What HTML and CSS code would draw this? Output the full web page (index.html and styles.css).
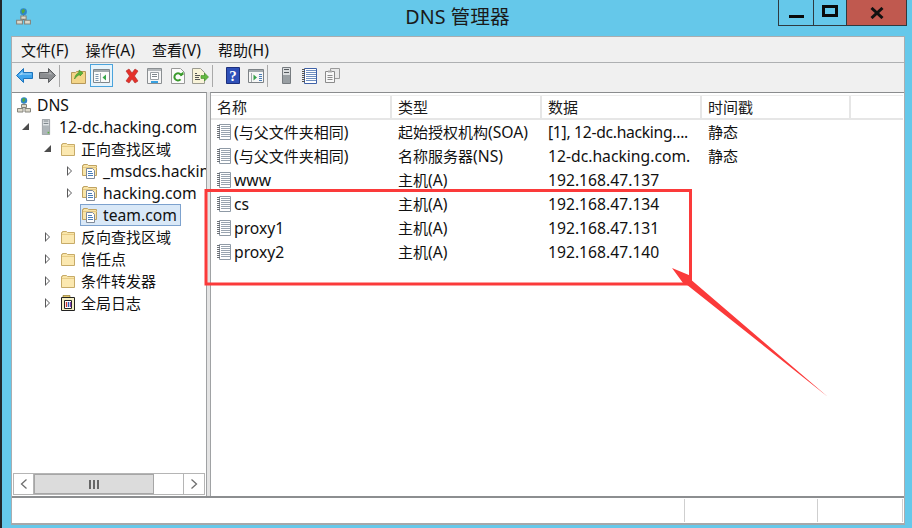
FILE: index.html
```html
<!DOCTYPE html>
<html lang="zh-CN">
<head>
<meta charset="utf-8">
<title>DNS 管理器</title>
<link rel="stylesheet" href="styles.css">
</head>
<body>
<svg class="sprites" width="0" height="0" aria-hidden="true">
  <defs>
    <symbol id="i-dns" viewBox="0 0 16 16">
      <circle cx="8" cy="3.500" r="3.200" fill="#2f86c9"/>
      <path d="M6 2.500l2-1.700 1.500 1.500-1 2-1.500 1z" fill="#55a83a"/>
      <path d="M7.500 6.500h1v2h-1z" fill="#6d7276"/>
      <path d="M5.500 7.500h5v3h-5zM1.500 11.500h5.500v3.500H1.500zM9 11.500h5.500v3.500H9z" fill="#dcd8ca" stroke="#84847c"/>
      <path d="M7.500 10.500h1v1h-1z" fill="#6d7276"/>
    </symbol>
    <symbol id="i-server" viewBox="0 0 16 20">
      <path d="M3.500.5h9v19h-9z" fill="#dfe3e5" stroke="#858c90"/>
      <path d="M5 2.500h6M5 5.500h6" stroke="#59646b"/>
      <path d="M4 8h8v11H4z" fill="#aeb5b9"/>
      <path d="M10 16h2v2h-2z" fill="#57b53c"/>
    </symbol>
    <symbol id="i-folder" viewBox="0 0 16 16">
      <path d="M1.500 14.500v-11h1v-1h4l1 1h7v11z" fill="#f9e5a8" stroke="#c7ab68"/>
      <path d="M2 5h12v1H2z" fill="#e8cd86"/>
      <path d="M2 6h12v8H2z" fill="#fbe8b0"/>
    </symbol>
    <symbol id="i-zone" viewBox="0 0 16 16">
      <path d="M.5 12.500v-10h1v-1h4l1 1h8v10z" fill="#f9e5a8" stroke="#bfa261"/>
      <path d="M1 4.500h14" stroke="#e3c782"/>
      <path d="M4.500 5.500h6l2 2v8h-8z" fill="#fff" stroke="#7f8a99"/>
      <path d="M6 8.500h4M6 10.500h5M6 12.500h5" stroke="#4a7fb8"/>
    </symbol>
    <symbol id="i-log" viewBox="0 0 16 16">
      <path d="M3 .5h7v2H3z" fill="#e3c76a" stroke="#8f7a30" stroke-width=".7"/>
      <path d="M1.500 2.500h13v13h-13z" fill="#f5efc6" stroke="#222"/>
      <path d="M4.500 5.500h7v8h-7z" fill="#fff" stroke="#222"/>
      <path d="M6.500 7v5" stroke="#d0342c" stroke-width="1.300"/>
      <path d="M8.500 7v5" stroke="#2a5db5" stroke-width="1.300"/>
      <path d="M10.500 7v5" stroke="#7a3fb0" stroke-width="1.300"/>
    </symbol>
    <symbol id="i-record" viewBox="0 0 14 16">
      <path d="M2.500.5h11v15h-11z" fill="#fff" stroke="#8f9aa6"/>
      <path d="M4 2.500h9M4 4.500h9M4 6.500h9M4 8.500h9M4 10.500h9M4 12.500h9" stroke="#99a4b0"/>
      <path d="M0 1.500h3M0 3.500h3M0 5.500h3M0 7.500h3M0 9.500h3M0 11.500h3M0 13.500h3" stroke="#6c7076"/>
    </symbol>
    <symbol id="i-notebook" viewBox="0 0 15 16">
      <path d="M2.500.5h12v15h-12z" fill="#fff" stroke="#3f62a8"/>
      <path d="M4 2.500h10M4 4.500h10M4 6.500h10M4 8.500h10M4 10.500h10M4 12.500h10" stroke="#6f8fc0"/>
      <path d="M0 1.500h3M0 3.500h3M0 5.500h3M0 7.500h3M0 9.500h3M0 11.500h3M0 13.500h3" stroke="#555"/>
    </symbol>
    <symbol id="i-win" viewBox="0 0 17 14">
      <path d="M.5.500h16v13H.5z" fill="#fbfbfb" stroke="#7f868b"/>
      <path d="M1 1h15v2H1z" fill="#a3aaae"/>
      <path d="M2.500 5.500h3M2.500 7.500h3M2.500 9.500h3M2.500 11.500h3" stroke="#7f99b0"/>
      <path d="M7.500 4v9.500" stroke="#a3aaae"/>
      <path d="M13 5.500L9.500 8.500 13 11.500z" fill="#37a74a"/>
    </symbol>
  </defs>
</svg>

<div class="desktop-edge"></div>
<header class="titlebar">
  <svg class="app-icon"><use href="#i-dns"/></svg>
  <h1 class="title">DNS 管理器</h1>
  <div class="controls">
    <div class="ctl ctl-min"><span class="min-bar"></span></div>
    <div class="ctl ctl-max"><span class="max-box"></span></div>
    <div class="ctl ctl-close">
      <svg width="14" height="12" viewBox="0 0 14 12"><path d="M1.500 1l11 10M12.500 1l-11 10" stroke="#111" stroke-width="3" fill="none"/></svg>
    </div>
  </div>
</header>

<main class="window">
  <nav class="menubar">
    <span class="menu"><span class="zh">文件</span>(F)</span>
    <span class="menu"><span class="zh">操作</span>(A)</span>
    <span class="menu"><span class="zh">查看</span>(V)</span>
    <span class="menu"><span class="zh">帮助</span>(H)</span>
  </nav>

  <div class="toolbar">
    <span class="tb"><svg width="17" height="15" viewBox="0 0 17 15"><path d="M7.500.5L.5 7.500l7 7V10.500h9v-6h-9z" fill="#3fa4ec" stroke="#1d74bd"/><path d="M2.500 7.500l4-4v2h9v1h-9z" fill="#a5d8f7"/></svg></span>
    <span class="tb"><svg width="17" height="15" viewBox="0 0 17 15"><path d="M9.500.5l7 7-7 7V10.500H.5v-6h9z" fill="#8b8d90" stroke="#5c5e61"/><path d="M1.500 5.500h9v-2l3 3z" fill="#b3b5b7"/></svg></span>
    <span class="sep"></span>
    <span class="tb"><svg width="15" height="17" viewBox="0 0 15 17"><path d="M.5 5.500h4l1-1h9v12H.500z" fill="#f3d588" stroke="#b6985a"/><path d="M3.500 12C4 8 6.500 6 8 5.500V3l4 3-3 3V7.500C7 8 5 10 3.500 12z" fill="#5cb53b" stroke="#3c8a25" stroke-width=".6"/></svg></span>
    <span class="tb tb-on"><svg width="17" height="14"><use href="#i-win"/></svg></span>
    <span class="tb tb-gap"><svg width="16" height="16" viewBox="0 0 16 16"><path d="M2 3l3-2 3 4 3-4 3 2-3.500 5L14 13l-3 2-3-4-3 4-3-2 3.500-5z" fill="#e5302a" stroke="#ad2a26" stroke-width=".6"/></svg></span>
    <span class="tb"><svg width="15" height="16" viewBox="0 0 15 16"><path d="M.5.500h14v15H.5z" fill="#f5f5f5" stroke="#8b8f92"/><path d="M1 1h13v2H1z" fill="#b4b8bb"/><path d="M3.500 4.500h8v7h-8z" fill="#fff" stroke="#9aa0a5"/><path d="M5 6.500h5M5 8.500h5" stroke="#7f878d"/><path d="M4 14h7" stroke="#38a0e0" stroke-width="2"/></svg></span>
    <span class="tb"><svg width="14" height="16" viewBox="0 0 14 16"><path d="M.5.500h9l4 4v11H.5z" fill="#fbfbfb" stroke="#989898"/><path d="M10.500 8a3.600 3.600 0 1 0-.9 3.400" fill="none" stroke="#3a9a2c" stroke-width="2"/><path d="M8 7h4.500V3.500z" fill="#3a9a2c"/></svg></span>
    <span class="tb"><svg width="17" height="16" viewBox="0 0 17 16"><path d="M.5.500h8l4 4V15.500H.5z" fill="#f8f3d8" stroke="#9a9a90"/><path d="M3 5.500h2M3 7.500h5M3 9.500h4M3 11.500h5" stroke="#555"/><path d="M9 7.500h3.500V5l4 4-4 4v-2.500H9z" fill="#63b93f" stroke="#3f8f25" stroke-width=".6"/></svg></span>
    <span class="sep sep-b"></span>
    <span class="tb"><svg width="14" height="17" viewBox="0 0 14 17"><path d="M.5.500h13v16H.5z" fill="#2f50b8" stroke="#1c2f7d"/><text class="help-q" x="7" y="13.500" text-anchor="middle">?</text></svg></span>
    <span class="tb"><svg width="16" height="14" viewBox="0 0 16 14"><path d="M.5.500h15v13H.5z" fill="#f7f7f7" stroke="#7d8286"/><path d="M1 1h14v2H1z" fill="#a3aaae"/><path d="M3.500 4v9" stroke="#a3aaae"/><path d="M5.500 5.500l3.500 3-3.500 3z" fill="#35a04a"/><path d="M11 5.500h3M11 7.500h3M11 9.500h3M11 11.500h3" stroke="#4a7fb8"/></svg></span>
    <span class="sep"></span>
    <span class="tb"><svg width="9" height="17" viewBox="0 0 9 17"><path d="M.5.500h8v16h-8z" fill="#dadddf" stroke="#777c80"/><path d="M2 2.500h5M2 5.500h5" stroke="#565b5f"/><path d="M1 8h7v8H1z" fill="#999fa3"/></svg></span>
    <span class="tb"><svg width="15" height="16"><use href="#i-notebook"/></svg></span>
    <span class="tb"><svg width="15" height="15" viewBox="0 0 15 15"><path d="M5.500.500h9v10h-9z" fill="#e9e9e9" stroke="#9a9a9a"/><path d="M.5 3.500h9v11h-9z" fill="#f8f8f8" stroke="#8b8b8b"/><path d="M2.500 7.500h5M2.500 9.500h5M2.500 11.500h5" stroke="#8b8b8b"/><path d="M3 2.500h4v2H3z" fill="#aaa"/></svg></span>
  </div>

  <div class="panes">
    <aside class="tree-pane">
      <div class="tree">
        <div class="row l0"><div class="label"><svg class="ico"><use href="#i-dns"/></svg><span>DNS</span></div></div>
        <div class="row l1"><i class="exp open"></i><div class="label"><svg class="ico"><use href="#i-server"/></svg><span>12-dc.hacking.com</span></div></div>
        <div class="row l2"><i class="exp open"></i><div class="label"><svg class="ico"><use href="#i-folder"/></svg><span class="zh">正向查找区域</span></div></div>
        <div class="row l3"><i class="exp"></i><div class="label"><svg class="ico"><use href="#i-zone"/></svg><span>_msdcs.hacking.com</span></div></div>
        <div class="row l3"><i class="exp"></i><div class="label"><svg class="ico"><use href="#i-zone"/></svg><span>hacking.com</span></div></div>
        <div class="row l3"><i class="exp none"></i><div class="label selected"><svg class="ico"><use href="#i-zone"/></svg><span>team.com</span></div></div>
        <div class="row l2"><i class="exp"></i><div class="label"><svg class="ico"><use href="#i-folder"/></svg><span class="zh">反向查找区域</span></div></div>
        <div class="row l2"><i class="exp"></i><div class="label"><svg class="ico"><use href="#i-folder"/></svg><span class="zh">信任点</span></div></div>
        <div class="row l2"><i class="exp"></i><div class="label"><svg class="ico"><use href="#i-folder"/></svg><span class="zh">条件转发器</span></div></div>
        <div class="row l2"><i class="exp"></i><div class="label"><svg class="ico"><use href="#i-log"/></svg><span class="zh">全局日志</span></div></div>
      </div>
      <div class="hscroll">
        <div class="sb-btn"><svg width="8" height="10" viewBox="0 0 8 10"><path d="M6.500.500L1.500 5l5 4.500" fill="none" stroke="#6f6f6f" stroke-width="1.300"/></svg></div>
        <div class="sb-thumb"><span class="grip"></span><span class="grip"></span><span class="grip"></span></div>
        <div class="sb-track"></div>
        <div class="sb-btn"><svg width="8" height="10" viewBox="0 0 8 10"><path d="M1.500.500l5 4.500-5 4.500" fill="none" stroke="#6f6f6f" stroke-width="1.300"/></svg></div>
      </div>
    </aside>
    <div class="splitter"></div>
    <section class="list-pane">
      <div class="thead">
        <div class="th c1 zh">名称</div>
        <div class="th c2 zh">类型</div>
        <div class="th c3 zh">数据</div>
        <div class="th c4 zh">时间戳</div>
      </div>
      <div class="tr"><div class="td c1"><svg class="rec"><use href="#i-record"/></svg><span>(<span class="zh">与父文件夹相同</span>)</span></div><div class="td c2"><span><span class="zh">起始授权机构</span>(SOA)</span></div><div class="td c3 trunc">[1], 12-dc.hacking....</div><div class="td c4 zh">静态</div></div>
      <div class="tr"><div class="td c1"><svg class="rec"><use href="#i-record"/></svg><span>(<span class="zh">与父文件夹相同</span>)</span></div><div class="td c2"><span><span class="zh">名称服务器</span>(NS)</span></div><div class="td c3">12-dc.hacking.com.</div><div class="td c4 zh">静态</div></div>
      <div class="tr"><div class="td c1"><svg class="rec"><use href="#i-record"/></svg>www</div><div class="td c2"><span><span class="zh">主机</span>(A)</span></div><div class="td c3">192.168.47.137</div><div class="td c4"></div></div>
      <div class="tr"><div class="td c1"><svg class="rec"><use href="#i-record"/></svg>cs</div><div class="td c2"><span><span class="zh">主机</span>(A)</span></div><div class="td c3">192.168.47.134</div><div class="td c4"></div></div>
      <div class="tr"><div class="td c1"><svg class="rec"><use href="#i-record"/></svg>proxy1</div><div class="td c2"><span><span class="zh">主机</span>(A)</span></div><div class="td c3">192.168.47.131</div><div class="td c4"></div></div>
      <div class="tr"><div class="td c1"><svg class="rec"><use href="#i-record"/></svg>proxy2</div><div class="td c2"><span><span class="zh">主机</span>(A)</span></div><div class="td c3">192.168.47.140</div><div class="td c4"></div></div>
    </section>
  </div>

  <footer class="statusbar">
    <div class="st st-a"></div>
    <div class="st st-b"></div>
    <div class="st st-c"></div>
  </footer>
</main>

<svg class="annotation" width="912" height="528" viewBox="0 0 912 528" aria-hidden="true">
  <rect x="206" y="190.500" width="484.500" height="93.500" fill="none" stroke="#fb3a3a" stroke-width="3"/>
  <path d="M672 268L690 275.500 689 278 828 397 686.500 284.500 683 283z" fill="#fb3a3a"/>
</svg>
</body>
</html>
```

FILE: styles.css
```css
* { box-sizing: border-box; }
html, body { margin: 0; padding: 0; }
body {
  position: relative;
  width: 912px;
  height: 528px;
  overflow: hidden;
  background: #65c8ea;
  font-family: "Noto Sans", "Noto Sans CJK SC", sans-serif;
  font-size: 15.7px;
  color: #111;
}
.zh { font-size: 15px; }
.sprites { position: absolute; }
.desktop-edge {
  position: absolute;
  left: 0;
  top: 0;
  width: 2px;
  height: 528px;
  background: #22262a;
}

.titlebar {
  height: 36px;
  display: flex;
  position: relative;
  justify-content: center;
}
.app-icon {
  position: absolute;
  left: 15px;
  top: 6px;
  width: 17px;
  height: 21px;
}
.title {
  margin: 5px 0 0;
  padding-left: 3px;
  font-size: 19.700px;
  font-weight: 400;
  line-height: 24px;
  color: #1a1a1a;
}
.controls {
  position: absolute;
  top: 0;
  left: 778px;
  display: flex;
  height: 26px;
  border: 1px solid #2e3a40;
  border-top: 0;
}
.ctl {
  height: 25px;
  display: flex;
  align-items: center;
  justify-content: center;
}
.ctl-min { width: 35px; border-right: 1px solid #2e3a40; }
.ctl-max { width: 33px; border-right: 1px solid #2e3a40; }
.ctl-close { width: 59px; background: #c0594f; padding-top: 1px; }
.min-bar { width: 15px; height: 3px; margin-top: 8px; background: #0a0a0a; }
.max-box { width: 16px; height: 12px; margin-bottom: 3px; border: 3px solid #0a0a0a; }

.window {
  margin-left: 11px;
  width: 894px;
  height: 489px;
  border: 1px solid #a9adb0;
  border-bottom: 2px solid #a5a8aa;
  background: #f0f0f0;
  display: flex;
  flex-direction: column;
}
.menubar {
  height: 26px;
  flex: none;
  display: flex;
  align-items: center;
  gap: 17px;
  padding-left: 9px;
  border-bottom: 1px solid #aeb0b2;
}
.menu { line-height: 24px; white-space: nowrap; }

.toolbar {
  height: 29px;
  flex: none;
  display: flex;
  align-items: center;
  padding: 0 0 4px 1px;
}
.tb {
  width: 23px;
  height: 23px;
  flex: none;
  display: flex;
  align-items: center;
  justify-content: center;
}
.tb-on { background: #e6f3fb; border: 1px solid #4aa3dc; }
.tb-gap { margin-left: 7px; }
.sep { width: 1px; height: 22px; margin-right: 7px; background: #a9a9a9; }
.sep-b { margin-right: 8px; }
.help-q { font-family: "Liberation Serif", serif; font-size: 15px; font-weight: 700; fill: #fff; }

.panes {
  flex: 1;
  min-height: 0;
  display: flex;
  border-bottom: 2px solid #8c8e90;
}
.tree-pane {
  width: 195px;
  flex: none;
  background: #fff;
  border-top: 1px solid #8a8c8e;
  border-right: 1px solid #a0a2a4;
  display: flex;
  flex-direction: column;
}
.tree { flex: 1; overflow: hidden; padding-top: 1px; }
.row {
  height: 22px;
  display: flex;
  align-items: center;
  white-space: nowrap;
}
.l0 { padding-left: 2px; }
.l1 { padding-left: 8px; }
.l2 { padding-left: 30px; }
.l3 { padding-left: 52px; }
.exp {
  width: 12px;
  height: 10px;
  margin-right: 4px;
  flex: none;
  position: relative;
}
.exp::before {
  content: "";
  position: absolute;
  left: 3px;
  top: 0;
  border-style: solid;
  border-width: 5px 0 5px 5px;
  border-color: transparent transparent transparent #59595a;
}
.exp::after {
  content: "";
  position: absolute;
  left: 4px;
  top: 2px;
  border-style: solid;
  border-width: 3px 0 3px 3px;
  border-color: transparent transparent transparent #fff;
}
.exp.open::before {
  left: 2px;
  top: 1px;
  border-width: 0 0 7px 7px;
  border-color: transparent transparent #4c4c4c transparent;
}
.exp.open::after, .exp.none::before, .exp.none::after { display: none; }
.label {
  display: flex;
  align-items: center;
  gap: 5px;
  height: 22px;
  padding: 0 3px 0 1px;
  border: 1px solid transparent;
  line-height: 20px;
}
.label.selected { background: #d9e8f7; border-color: #7da2ce; }
.ico { width: 16px; height: 16px; flex: none; }

.hscroll {
  height: 22px;
  flex: none;
  margin: 0 1px 1px;
  display: flex;
  background: #fff;
  border: 1px solid #b5b5b5;
}
.sb-btn {
  width: 20px;
  flex: none;
  display: flex;
  align-items: center;
  justify-content: center;
}
.sb-thumb {
  width: 120px;
  flex: none;
  background: #dcdcdc;
  border: 1px solid #a6a6a6;
  display: flex;
  align-items: center;
  justify-content: center;
  gap: 2px;
}
.grip { width: 2px; height: 9px; background: #666; }
.sb-track { flex: 1; border-right: 1px solid #b5b5b5; }
.hscroll .sb-btn:first-child { border-right: 1px solid #b5b5b5; }

.splitter { width: 3px; flex: none; background: #e4e4e4; }
.list-pane {
  flex: 1;
  min-width: 0;
  background: #fff;
  border-top: 1px solid #8a8c8e;
  border-left: 1px solid #a0a2a4;
  padding-top: 2px;
}
.thead {
  height: 25px;
  display: flex;
  border-top: 1px solid #ededed;
  border-bottom: 2px solid #e6e6e6;
  margin-right: 1px;
}
.th {
  height: 22px;
  line-height: 22px;
  padding-left: 6px;
  color: #1a1a1a;
  border-right: 2px solid #e6e6e6;
}
.c1 { width: 181px; flex: none; }
.c2 { width: 150px; flex: none; }
.c3 { width: 160px; flex: none; }
.c4 { width: 149px; flex: none; }
.tr {
  height: 24px;
  display: flex;
  align-items: center;
}
.td {
  padding-left: 6px;
  display: flex;
  align-items: center;
  white-space: nowrap;
  overflow: hidden;
  line-height: 24px;
}
.trunc { letter-spacing: -0.3px; }
.rec { width: 14px; height: 16px; margin-right: 3px; flex: none; }

.statusbar {
  height: 25px;
  flex: none;
  display: flex;
  background: #fff;
  padding-top: 1px;
}
.st { height: 23px; border-right: 1px solid #cfcfcf; }
.st-a { width: 673px; }
.st-b { width: 133px; }
.st-c { width: 85px; }

.annotation {
  position: absolute;
  left: 0;
  top: 0;
  pointer-events: none;
}
```
